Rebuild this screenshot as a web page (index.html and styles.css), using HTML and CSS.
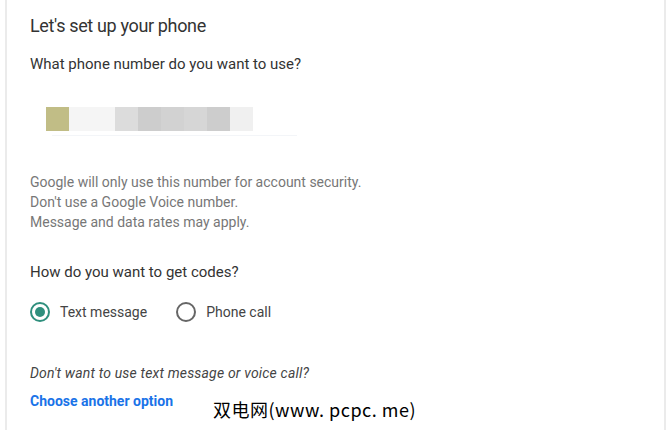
FILE: index.html
```html
<!DOCTYPE html>
<html lang="en">
<head>
    <meta charset="UTF-8">
    <meta name="viewport" content="width=device-width, initial-scale=1.0">
    <title>Let's set up your phone</title>
    <link rel="stylesheet" href="styles.css">
</head>
<body>
    <div class="card">
        <h1 class="title">Let's set up your phone</h1>
        <div class="question">What phone number do you want to use?</div>

        <div class="phone-field">
            <div class="blur">
                <span class="px px-olive"></span>
                <span class="px px-1"></span>
                <span class="px px-1"></span>
                <span class="px px-2"></span>
                <span class="px px-3"></span>
                <span class="px px-4"></span>
                <span class="px px-5"></span>
                <span class="px px-3"></span>
                <span class="px px-6"></span>
            </div>
            <div class="field-line"></div>
        </div>

        <div class="hint">
            Google will only use this number for account security.<br>
            Don't use a Google Voice number.<br>
            Message and data rates may apply.
        </div>

        <div class="question codes">How do you want to get codes?</div>

        <div class="radios">
            <label class="radio checked"><span class="circle"></span>Text message</label>
            <label class="radio"><span class="circle"></span>Phone call</label>
        </div>

        <div class="alt">Don't want to use text message or voice call?</div>
        <div class="alt-row">
            <a href="#" class="link">Choose another option</a>
            <span class="watermark">双电网(www. pcpc. me)</span>
        </div>
    </div>
</body>
</html>
```

FILE: styles.css
```css
body {
    margin: 0;
    padding: 0;
    background-color: #fff;
    font-family: Roboto, Arial, sans-serif;
    color: #333;
}
.card {
    margin-left: 5px;
    width: 661px;
    height: 430px;
    border-left: 2px solid #ebebeb;
    border-right: 2px solid #ebebeb;
    padding: 0 0 0 23px;
    box-sizing: border-box;
}
.title {
    margin: 0;
    padding-top: 14px;
    font-size: 18px;
    font-weight: 400;
    letter-spacing: -0.35px;
    line-height: 24px;
    color: #333;
}
.question {
    margin-top: 16px;
    font-size: 15px;
    line-height: 20px;
    color: #333;
}
.phone-field {
    margin-top: 33px;
    padding-left: 16px;
    width: 252px;
}
.blur {
    display: flex;
}
.px {
    width: 23px;
    height: 24px;
    background-color: #f4f4f4;
}
.px-olive { background-color: #c1bd86; }
.px-1 { background-color: #f5f5f5; }
.px-2 { background-color: #dcdcdc; }
.px-3 { background-color: #cdcdcd; }
.px-4 { background-color: #d2d2d2; }
.px-5 { background-color: #d6d6d6; }
.px-6 { background-color: #f0f0f0; }
.field-line {
    margin-top: 4px;
    margin-left: 6px;
    height: 1px;
    width: 245px;
    background-color: #f3f5f8;
}
.hint {
    margin-top: 36px;
    font-size: 14px;
    line-height: 20px;
    color: #777;
}
.codes {
    margin-top: 30px;
}
.radios {
    display: flex;
    gap: 29px;
    margin-top: 20px;
}
.radio {
    display: flex;
    align-items: center;
    gap: 10px;
    font-size: 14px;
    color: #444;
}
.circle {
    width: 16px;
    height: 16px;
    border: 2px solid #666;
    border-radius: 50%;
    box-sizing: content-box;
    position: relative;
}
.radio.checked .circle {
    border-color: #2f8f7d;
}
.radio.checked .circle::after {
    content: "";
    position: absolute;
    left: 3px;
    top: 3px;
    width: 10px;
    height: 10px;
    border-radius: 50%;
    background-color: #2f8f7d;
}
.alt {
    margin-top: 41px;
    font-size: 14px;
    font-style: italic;
    letter-spacing: 0.18px;
    line-height: 20px;
    color: #444;
}
.alt-row {
    display: flex;
    align-items: flex-start;
    margin-top: 8px;
}
.link {
    font-size: 14px;
    font-weight: 700;
    color: #1a73e8;
    text-decoration: none;
    line-height: 20px;
}
.watermark {
    margin-left: 40px;
    margin-top: 5px;
    font-family: "Noto Sans CJK SC", sans-serif;
    font-size: 18px;
    letter-spacing: 0.5px;
    color: #000;
}
```
